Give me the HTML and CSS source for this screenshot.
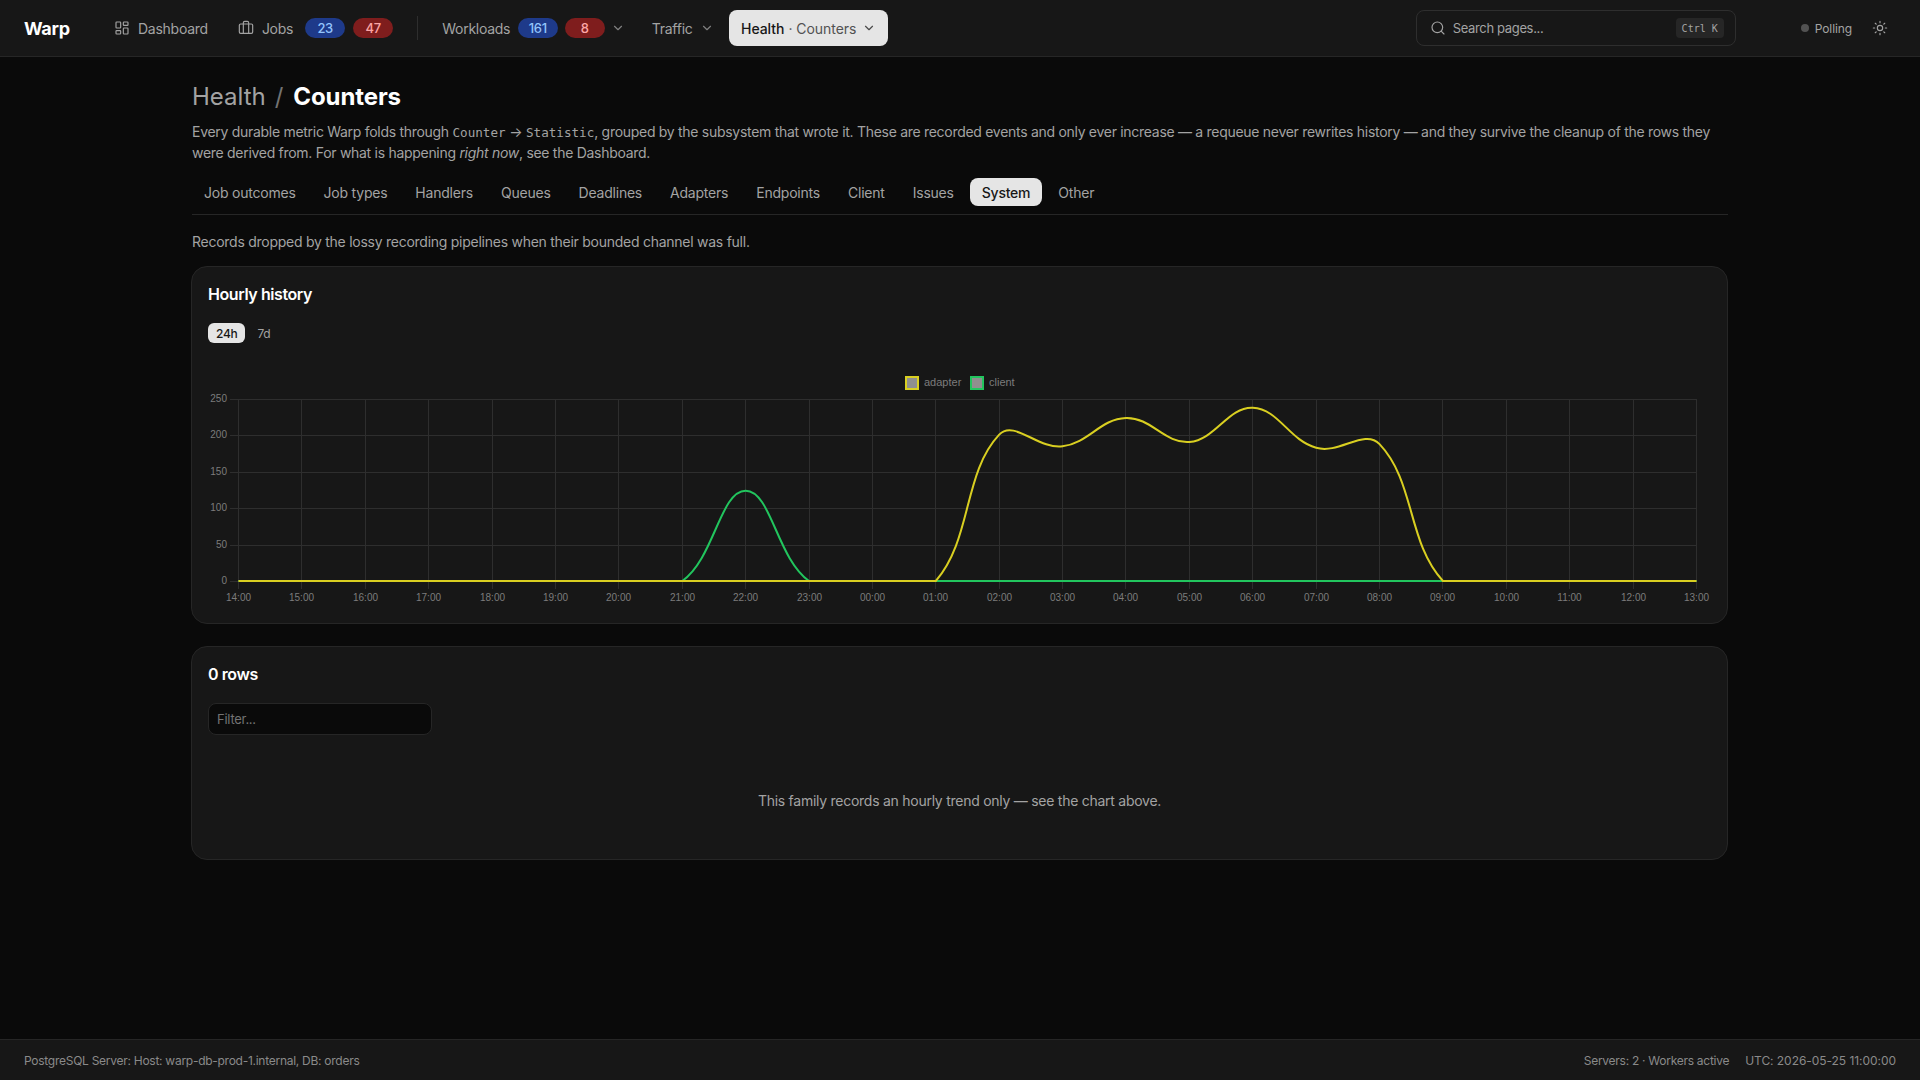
FILE: index.html
```html
<!DOCTYPE html>
<html>
<head>
    <title>Warp - Counters</title>
    <link rel="stylesheet" href="styles.css">
</head>
<body>
    <!-- Top Nav -->
    <header class="topbar">
        <a class="logo">Warp</a>
        <nav class="nav">
            <a class="nav-item nav-dash">
                <svg class="icon" viewBox="0 0 24 24"><rect x="3" y="3" width="7" height="9" rx="1"/><rect x="14" y="3" width="7" height="5" rx="1"/><rect x="14" y="12" width="7" height="9" rx="1"/><rect x="3" y="16" width="7" height="5" rx="1"/></svg>
                Dashboard
            </a>
            <a class="nav-item nav-jobs">
                <svg class="icon" viewBox="0 0 24 24"><path d="M16 20V4a2 2 0 0 0-2-2h-4a2 2 0 0 0-2 2v16"/><rect x="2" y="6" width="20" height="14" rx="2"/></svg>
                Jobs
                <span class="badge badge-blue">23</span>
                <span class="badge badge-red">47</span>
            </a>
            <span class="nav-divider"></span>
            <a class="nav-item nav-workloads">
                Workloads
                <span class="badge badge-blue">161</span>
                <span class="badge badge-red">8</span>
                <svg class="chevron" viewBox="0 0 24 24"><path d="m6 9 6 6 6-6"/></svg>
            </a>
            <a class="nav-item nav-traffic">
                Traffic
                <svg class="chevron" viewBox="0 0 24 24"><path d="m6 9 6 6 6-6"/></svg>
            </a>
            <a class="nav-item nav-active">
                Health <span class="nav-sub">· Counters</span>
                <svg class="chevron" viewBox="0 0 24 24"><path d="m6 9 6 6 6-6"/></svg>
            </a>
        </nav>
        <div class="search">
            <svg class="icon" viewBox="0 0 24 24"><circle cx="11" cy="11" r="8"/><path d="m21 21-4.3-4.3"/></svg>
            <span class="search-text">Search pages...</span>
            <kbd class="kbd">Ctrl K</kbd>
        </div>
        <div class="status"><span class="status-dot"></span>Polling</div>
        <button class="theme-btn">
            <svg class="icon" viewBox="0 0 24 24"><circle cx="12" cy="12" r="4"/><path d="M12 2v2M12 20v2M4.9 4.9l1.4 1.4M17.7 17.7l1.4 1.4M2 12h2M20 12h2M6.3 17.7l-1.4 1.4M19.1 4.9l-1.4 1.4"/></svg>
        </button>
    </header>

    <main class="page">
        <h1 class="title"><span class="title-parent">Health</span><span class="title-sep">/</span>Counters</h1>
        <p class="desc">Every durable metric Warp folds through <code>Counter</code> → <code>Statistic</code>, grouped by the subsystem that wrote it. These are recorded events and only ever increase — a requeue never rewrites history — and they survive the cleanup of the rows they were derived from. For what is happening <em>right now</em>, see the Dashboard.</p>

        <div class="tabs">
            <a class="tab">Job outcomes</a>
            <a class="tab">Job types</a>
            <a class="tab">Handlers</a>
            <a class="tab">Queues</a>
            <a class="tab">Deadlines</a>
            <a class="tab">Adapters</a>
            <a class="tab">Endpoints</a>
            <a class="tab">Client</a>
            <a class="tab">Issues</a>
            <a class="tab tab-active">System</a>
            <a class="tab">Other</a>
        </div>

        <p class="subtitle">Records dropped by the lossy recording pipelines when their bounded channel was full.</p>

        <section class="card card-chart">
            <h2 class="card-title">Hourly history</h2>
            <div class="range">
                <button class="range-btn range-active">24h</button>
                <button class="range-btn">7d</button>
            </div>
            <svg class="chart" id="historyChart" viewBox="0 0 1504 240"></svg>
        </section>

        <section class="card card-rows">
            <h2 class="card-title">0 rows</h2>
            <input class="filter" type="text" placeholder="Filter...">
            <p class="empty">This family records an hourly trend only — see the chart above.</p>
        </section>
    </main>

    <footer class="footer">
        <span>PostgreSQL Server: Host: warp-db-prod-1.internal, DB: orders</span>
        <span class="footer-right">
            <span>Servers: 2 · Workers active</span>
            <span class="footer-clock">UTC: 2026-05-25 11:00:00</span>
        </span>
    </footer>

    <script src="chart.js"></script>
</body>
</html>
```

FILE: styles.css
```css
* {
    box-sizing: border-box;
}

body {
    background: #0a0a0a;
    margin: 0;
    font-family: Inter, 'Noto Sans', sans-serif;
    font-size: 14px;
    letter-spacing: -0.26px;
    color: #a3a3a3;
    min-height: 100vh;
    display: flex;
    flex-direction: column;
}

.icon {
    width: 16px;
    height: 16px;
    stroke: currentColor;
    fill: none;
    stroke-width: 1.75;
    stroke-linecap: round;
    stroke-linejoin: round;
    flex-shrink: 0;
}

.chevron {
    width: 14px;
    height: 14px;
    stroke: currentColor;
    fill: none;
    stroke-width: 2;
    stroke-linecap: round;
    stroke-linejoin: round;
    opacity: 0.75;
}

/* Top nav */
.topbar {
    height: 57px;
    background: #171717;
    border-bottom: 1px solid #262626;
    padding: 0 24px;
    display: flex;
    align-items: center;
    flex-shrink: 0;
}

.logo {
    width: 90px;
    font-size: 18px;
    font-weight: 700;
    color: #fff;
    letter-spacing: -0.3px;
}

.nav {
    display: flex;
    align-items: center;
    flex: 1;
}

.nav-item {
    display: flex;
    align-items: center;
    color: #a3a3a3;
}

.nav-dash .icon,
.nav-jobs .icon {
    margin-right: 8px;
}

.nav-jobs {
    margin-left: 30px;
}

.badge {
    height: 20px;
    min-width: 40px;
    border-radius: 10px;
    font-size: 13px;
    font-weight: 500;
    letter-spacing: -0.3px;
    display: flex;
    align-items: center;
    justify-content: center;
}

.badge-blue {
    background: #1e3a8a;
    color: #93c5fd;
}

.badge-red {
    background: #7f1d1d;
    color: #fca5a5;
}

.nav-jobs .badge-blue {
    margin-left: 12px;
}

.nav-jobs .badge-red {
    margin-left: 8px;
}

.nav-workloads .badge-red {
    margin-left: 7px;
}

.nav-divider {
    width: 1px;
    height: 24px;
    background: #2e2e2e;
    margin: 0 24px;
}

.nav-workloads .badge-blue {
    margin-left: 7.5px;
}

.nav-workloads .chevron {
    margin-left: 6px;
}

.nav-traffic {
    margin-left: 27px;
}

.nav-traffic .chevron {
    margin-left: 7px;
}

.nav-active {
    margin-left: 15.5px;
    height: 36px;
    padding: 0 12px;
    border-radius: 8px;
    background: #e5e5e5;
    color: #171717;
    font-weight: 500;
    letter-spacing: -0.05px;
}

.nav-sub {
    margin-left: 4px;
    color: #525252;
    font-weight: 400;
}

.nav-active .chevron {
    margin-left: 6px;
}

.search {
    width: 320px;
    height: 36px;
    border: 1px solid #2e2e2e;
    border-radius: 8px;
    padding: 0 11px 0 13px;
    display: flex;
    align-items: center;
    gap: 7px;
    color: #a3a3a3;
}

.search-text {
    font-size: 13px;
    letter-spacing: -0.35px;
    flex: 1;
}

.kbd {
    height: 20px;
    padding: 0 6px;
    border-radius: 4px;
    background: #262626;
    font-family: 'DejaVu Sans Mono', monospace;
    font-size: 10px;
    letter-spacing: 0;
    display: flex;
    align-items: center;
    color: #a3a3a3;
}

.status {
    margin-left: 65px;
    display: flex;
    align-items: center;
    gap: 6px;
    font-size: 12px;
    letter-spacing: -0.1px;
}

.status-dot {
    width: 8px;
    height: 8px;
    border-radius: 50%;
    background: #525252;
}

.theme-btn {
    margin-left: 20px;
    margin-right: 8px;
    padding: 0;
    background: none;
    border: none;
    color: #a3a3a3;
    display: flex;
}

/* Page */
.page {
    width: 1536px;
    margin: 0 auto;
    padding-top: 24px;
    flex: 1;
}

.title {
    margin: 0;
    font-size: 24px;
    line-height: 32px;
    font-weight: 700;
    letter-spacing: -0.1px;
    color: #fff;
}

.title-parent {
    font-weight: 400;
    letter-spacing: 0;
    color: #a3a3a3;
}

.title-sep {
    font-weight: 400;
    color: #737373;
    margin: 0 10px 0 9px;
}

.desc {
    margin: 8px 0 0;
    line-height: 21px;
    letter-spacing: -0.29px;
}

code {
    font-family: 'DejaVu Sans Mono', monospace;
    font-size: 12.6px;
    line-height: 0;
    letter-spacing: 0;
}

.tabs {
    margin-top: 15px;
    padding-bottom: 8px;
    border-bottom: 1px solid #262626;
    display: flex;
    gap: 4px;
    letter-spacing: -0.22px;
}

.tab {
    height: 28px;
    padding: 0 12px;
    border-radius: 8px;
    display: flex;
    align-items: center;
    color: #a3a3a3;
}

.tab-active {
    background: #e5e5e5;
    color: #171717;
    font-weight: 500;
}

.subtitle {
    margin: 16px 0 0;
    line-height: 21px;
}

.card {
    background: #171717;
    border: 1px solid #262626;
    border-radius: 16px;
    padding: 15px 16px;
    margin-left: -1px;
}

.card-chart {
    margin-top: 14px;
    height: 358px;
}

.card-rows {
    margin-top: 22px;
    height: 214px;
}

.card-title {
    margin: 0;
    font-size: 16px;
    line-height: 24px;
    font-weight: 600;
    letter-spacing: -0.42px;
    color: #fff;
}

.range {
    margin-top: 17px;
    display: flex;
    gap: 4px;
}

.range-btn {
    height: 20px;
    padding: 0 8px;
    border: none;
    border-radius: 6px;
    background: none;
    font-family: inherit;
    font-size: 12px;
    letter-spacing: -0.3px;
    color: #a3a3a3;
}

.range-active {
    background: #e5e5e5;
    color: #171717;
    font-weight: 500;
}

.chart {
    display: block;
    width: 1504px;
    height: 240px;
    margin-top: 24px;
    font-family: 'Liberation Sans', Arial, sans-serif;
    font-size: 10px;
    letter-spacing: 0;
}

.chart-grid {
    stroke: #2e2e2e;
    stroke-width: 1;
    fill: none;
    shape-rendering: crispEdges;
}

.chart-label {
    fill: #7c7c7c;
}

.chart-legend {
    font-size: 11px;
}

.chart-line {
    fill: none;
    stroke-width: 2;
}

.filter {
    display: block;
    margin-top: 17px;
    width: 224px;
    height: 32px;
    padding: 0 8px;
    background: #0a0a0a;
    border: 1px solid #262626;
    border-radius: 8px;
    font-family: inherit;
    font-size: 13px;
    letter-spacing: -0.26px;
    color: #fff;
}

.filter::placeholder {
    color: #737373;
}

input:focus {
    outline: none;
}

.empty {
    margin: 55px 0 0;
    text-align: center;
    line-height: 21px;
}

/* Footer */
.footer {
    height: 41px;
    background: #171717;
    border-top: 1px solid #262626;
    padding: 0 24px;
    font-size: 12px;
    letter-spacing: -0.27px;
    color: #8a8a8a;
    display: flex;
    align-items: center;
    justify-content: space-between;
    flex-shrink: 0;
}

.footer-right {
    display: flex;
    gap: 16px;
}

.footer-clock {
    letter-spacing: -0.05px;
}
```

FILE: chart.js
```js
const svg = document.getElementById('historyChart');
const NS = 'http://www.w3.org/2000/svg';

const left = 30;
const right = 1488;
const top_ = 32;
const bottom = 214;
const maxY = 250;

const hours = [];
for (let i = 0; i < 24; i++) {
    hours.push(String((14 + i) % 24).padStart(2, '0') + ':00');
}

const adapter = new Array(24).fill(0);
[201, 185, 224, 191, 238, 183, 188].forEach((v, i) => { adapter[12 + i] = v; });
const client = new Array(24).fill(0);
client[8] = 124;

const xAt = i => left + 0.5 + (right - left) * i / 23;
const yAt = v => bottom - (bottom - top_) * v / maxY;

function add(tag, attrs, text) {
    const el = document.createElementNS(NS, tag);
    Object.keys(attrs).forEach(k => el.setAttribute(k, attrs[k]));
    if (text !== undefined) el.textContent = text;
    svg.appendChild(el);
}

// Same spline the chart libraries use, tension 0.4, clamped to the plot area
function linePath(values) {
    const pts = values.map((v, i) => ({ x: xAt(i), y: yAt(v) }));
    const ctrl = pts.map((p, i) => {
        const a = pts[i - 1] || p;
        const b = pts[i + 1] || p;
        const d01 = Math.hypot(p.x - a.x, p.y - a.y);
        const d12 = Math.hypot(b.x - p.x, b.y - p.y);
        const sum = d01 + d12 || 1;
        const fa = 0.4 * d01 / sum;
        const fb = 0.4 * d12 / sum;
        const clamp = y => Math.min(bottom, Math.max(top_, y));
        return {
            px: p.x - fa * (b.x - a.x), py: clamp(p.y - fa * (b.y - a.y)),
            nx: p.x + fb * (b.x - a.x), ny: clamp(p.y + fb * (b.y - a.y))
        };
    });
    let d = `M${pts[0].x} ${pts[0].y}`;
    for (let i = 1; i < pts.length; i++) {
        d += `C${ctrl[i - 1].nx} ${ctrl[i - 1].ny} ${ctrl[i].px} ${ctrl[i].py} ${pts[i].x} ${pts[i].y}`;
    }
    return d;
}

// Grid and ticks
let grid = '';
for (let v = 0; v <= maxY; v += 50) {
    const y = Math.round(yAt(v)) + 0.5;
    grid += `M${left - 8} ${y}H${right + 0.5}`;
    add('text', { x: left - 11, y: y + 2, 'text-anchor': 'end', class: 'chart-label' }, v);
}
hours.forEach((h, i) => {
    const x = Math.floor(xAt(i)) + 0.5;
    grid += `M${x} ${top_}V${bottom + 8}`;
    add('text', { x: x, y: bottom + 20, 'text-anchor': 'middle', class: 'chart-label' }, h);
});
add('path', { d: grid, class: 'chart-grid' });

// Lines
add('path', { d: linePath(client), class: 'chart-line', stroke: '#22c55e' });
add('path', { d: linePath(adapter), class: 'chart-line', stroke: '#d9cf21' });

// Legend
add('rect', { x: 698, y: 10, width: 12, height: 12, fill: '#8f8f8f', stroke: '#d9cf21', 'stroke-width': 2 });
add('text', { x: 716, y: 19, class: 'chart-label chart-legend' }, 'adapter');
add('rect', { x: 763, y: 10, width: 12, height: 12, fill: '#8f8f8f', stroke: '#22c55e', 'stroke-width': 2 });
add('text', { x: 781, y: 19, class: 'chart-label chart-legend' }, 'client');
```
